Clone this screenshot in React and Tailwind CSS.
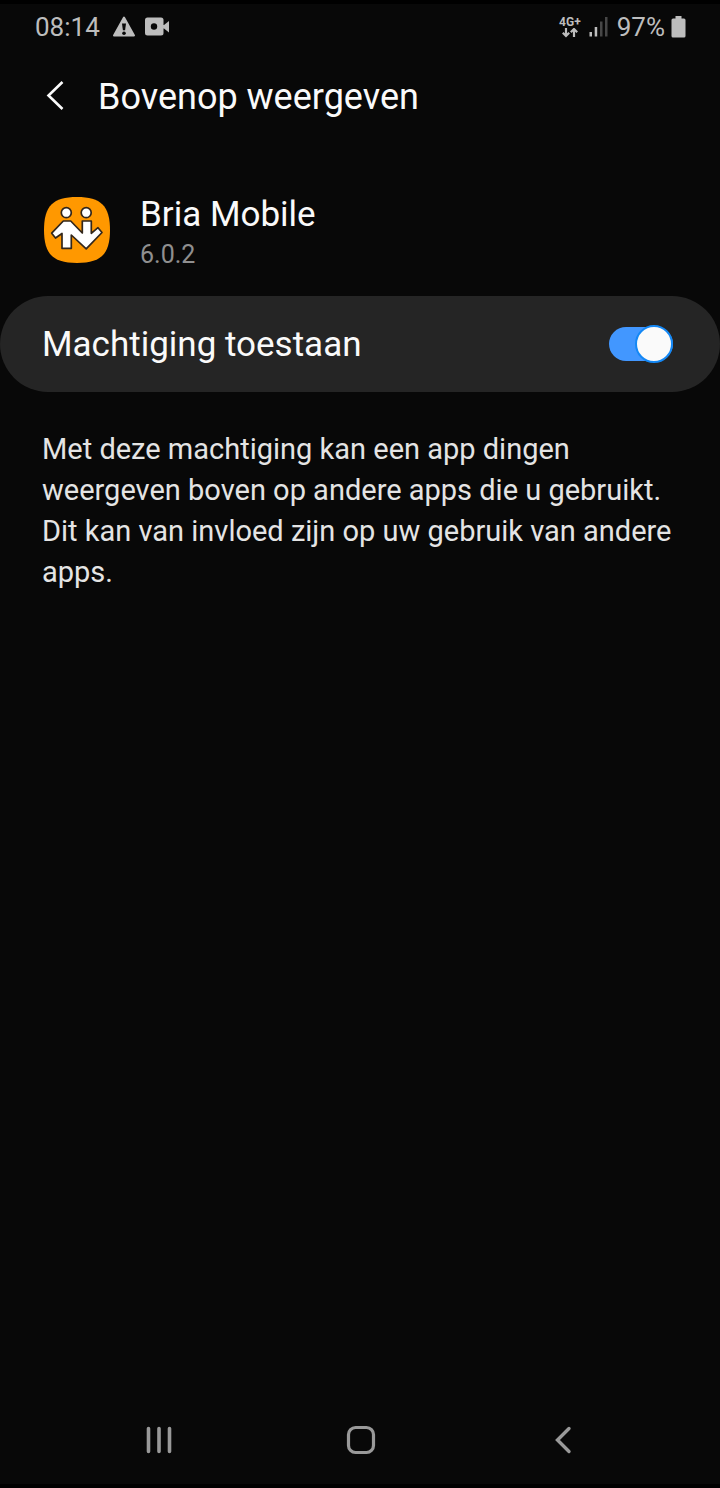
import React, { useState } from "react";

const StatusBar = () => (
  <div className="flex items-center justify-between border-t-4 border-black pl-[35px] pr-[34px] h-[50px] text-[#bdbdbd]">
    <div className="flex items-center">
      <span className="text-[26px] leading-8">08:14</span>

      {/* Warning */}
      <svg className="ml-3 h-6 w-6" viewBox="0 0 24 24" aria-hidden="true">
        <path d="M12 2.5 22 20.5H2Z" fill="currentColor" stroke="currentColor" strokeWidth="2" strokeLinejoin="round" />
        <path d="M10 8.5h4l-.9 6.8h-2.2Z" fill="#080808" />
        <circle cx="12" cy="18.2" r="1.8" fill="#080808" />
      </svg>

      {/* Camera */}
      <svg className="ml-2 h-6 w-[26px]" viewBox="0 0 26 24" aria-hidden="true">
        <rect x="1" y="2.5" width="18.5" height="18" rx="2.5" fill="currentColor" />
        <path d="M18 10h2l5-4v11.5l-5-4h-2Z" fill="currentColor" />
        <circle cx="10" cy="11.5" r="3.2" fill="#080808" />
      </svg>
    </div>

    <div className="flex items-center">
      <div className="flex flex-col items-center">
        <span className="text-[12px] font-bold leading-3">4G+</span>
        <svg className="h-[10px] w-4" viewBox="0 0 16 10" fill="none" stroke="currentColor" strokeWidth="2.2" aria-hidden="true">
          <path d="M4 0v8M.8 4.8 4 8 7.200 4.8M12 9V1M8.800 4.2 12 1 15.200 4.2" />
        </svg>
      </div>

      {/* Signal strength */}
      <svg className="ml-2 h-5 w-5" viewBox="0 0 20 20" fill="currentColor" aria-hidden="true">
        <rect x="0.5" y="15" width="2.5" height="4.5" />
        <rect x="5.700" y="10" width="2.5" height="9.5" />
        <rect x="11" y="4.5" width="2.5" height="15" opacity="0.35" />
        <rect x="16" y="0" width="2.5" height="19.5" opacity="0.35" />
      </svg>

      <span className="ml-2 text-[26px] leading-8">97%</span>

      {/* Battery */}
      <svg className="ml-1.5 h-[22px] w-[15px]" viewBox="0 0 15 22" fill="currentColor" aria-hidden="true">
        <path d="M4.5 0h6v2.500h2.500a1.500 1.500 0 0 1 1.500 1.500v16a1.500 1.500 0 0 1-1.500 1.500h-11A1.500 1.500 0 0 1 .5 20v-16A1.500 1.500 0 0 1 2 2.500h2.500Z" />
      </svg>
    </div>
  </div>
);

const AppLogo = () => (
  <svg className="h-[66px] w-[66px] shrink-0" viewBox="0 0 66 66" role="img" aria-label="Bria Mobile">
    <path d="M33 0C57 0 66 9 66 33S57 66 33 66 0 57 0 33 9 0 33 0Z" fill="#ff9800" />
    <g fill="#fff" stroke="#33271b" strokeWidth="1.7" strokeLinejoin="round">
      <circle cx="22.3" cy="15.7" r="5" />
      <circle cx="42.2" cy="15.7" r="5" />
      <path d="M19.3 24 7.7 36.2 11.5 41 18 36.5V51.3H27.3V38L42.2 51.8 58 35.5 54 30.7 47.3 36.3V24H38.3V36L26.7 24Z" />
    </g>
  </svg>
);

const App = () => {
  const [allowed, setAllowed] = useState(true);

  return (
    <div className="flex min-h-screen flex-col border-b-4 border-black bg-[#080808] font-[Roboto,sans-serif] text-[#fafafa]">
      <StatusBar />

      <header className="flex items-center px-10 pt-[25px]">
        <button type="button" aria-label="Terug" className="flex h-11 w-8 items-center justify-center">
          <svg className="h-8 w-8" viewBox="0 0 32 32" fill="none" stroke="currentColor" strokeWidth="2.6" aria-hidden="true">
            <path d="M22.5 1 8.5 14.5 22.5 28" />
          </svg>
        </button>
        <h1 className="ml-[26px] text-[36px] leading-11">Bovenop weergeven</h1>
      </header>

      <main className="flex-1">
        {/* App info */}
        <div className="flex items-start pl-11 pt-[78px] pb-[19px]">
          <AppLogo />
          <div className="ml-[30px]">
            <h2 className="text-[35px] leading-9">Bria Mobile</h2>
            <p className="text-[25px] leading-11 text-[#8f8f8f]">6.0.2</p>
          </div>
        </div>

        {/* Permission switch */}
        <label
          htmlFor="permission"
          className="flex cursor-pointer items-start justify-between rounded-full bg-[#252525] pt-[29px] pb-[27px] pl-[42px] pr-[47px]"
        >
          <span className="text-[35px] leading-10">Machtiging toestaan</span>
          <span className="relative flex h-[38px] w-16 items-center">
            <input
              id="permission"
              type="checkbox"
              role="switch"
              checked={allowed}
              onChange={(event) => setAllowed(event.target.checked)}
              className="peer h-[34px] w-full cursor-pointer appearance-none rounded-full bg-[#5a5a5a] checked:bg-[#4297ff]"
            />
            <span className="pointer-events-none absolute left-0 h-[38px] w-[38px] rounded-full border-2 border-[#8f8f8f] bg-[#fafafa] peer-checked:left-auto peer-checked:right-0 peer-checked:border-[#1488f5]" />
          </span>
        </label>

        <p className="px-[42px] pt-[37px] text-[29px] leading-[41px] text-[#e4e4e4]">
          Met deze machtiging kan een app dingen weergeven boven op andere apps die u gebruikt. Dit kan van invloed
          zijn op uw gebruik van andere apps.
        </p>
      </main>

      {/* Navigation bar */}
      <nav className="flex h-[88px] items-center justify-around pl-[58px] pr-14 text-[#999999]">
        <button type="button" aria-label="Recente apps" className="p-2">
          <svg className="h-8 w-8" viewBox="0 0 32 32" stroke="currentColor" strokeWidth="3.6" strokeLinecap="round" aria-hidden="true">
            <path d="M5.5 4.5v23M16 4.5v23M26.5 4.5v23" />
          </svg>
        </button>
        <button type="button" aria-label="Startscherm" className="p-2">
          <svg className="h-8 w-8" viewBox="0 0 32 32" fill="none" stroke="currentColor" strokeWidth="3.2" aria-hidden="true">
            <rect x="3.5" y="3.5" width="25" height="25" rx="7" />
          </svg>
        </button>
        <button type="button" aria-label="Vorige" className="p-2">
          <svg className="h-8 w-8" viewBox="0 0 32 32" fill="none" stroke="currentColor" strokeWidth="3.4" strokeLinecap="round" aria-hidden="true">
            <path d="M22 4.5 10.5 16 22 27.5" />
          </svg>
        </button>
      </nav>
    </div>
  );
};

export default App;
